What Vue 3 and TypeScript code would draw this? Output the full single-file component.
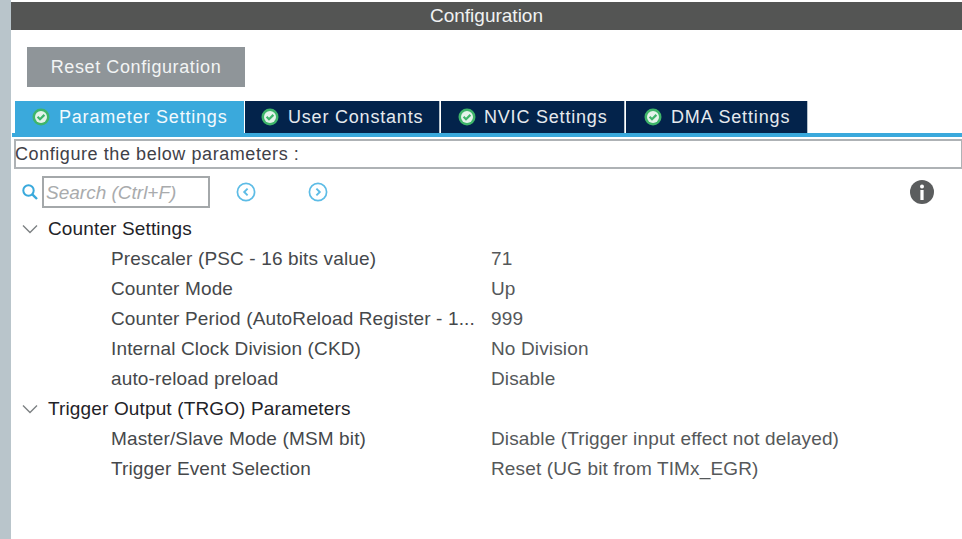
<script setup lang="ts">
interface Row { label: string; value: string }
interface Group { title: string; rows: Row[] }

const tabs = ['Parameter Settings', 'User Constants', 'NVIC Settings', 'DMA Settings']
const groups: Group[] = [
  {
    title: 'Counter Settings',
    rows: [
      { label: 'Prescaler (PSC - 16 bits value)', value: '71' },
      { label: 'Counter Mode', value: 'Up' },
      { label: 'Counter Period (AutoReload Register - 1...', value: '999' },
      { label: 'Internal Clock Division (CKD)', value: 'No Division' },
      { label: 'auto-reload preload', value: 'Disable' },
    ],
  },
  {
    title: 'Trigger Output (TRGO) Parameters',
    rows: [
      { label: 'Master/Slave Mode (MSM bit)', value: 'Disable (Trigger input effect not delayed)' },
      { label: 'Trigger Event Selection', value: 'Reset (UG bit from TIMx_EGR)' },
    ],
  },
]
</script>

<template>
  <div class="page">
    <div class="strip"></div>
    <main class="panel">
      <header class="title">Configuration</header>
      <button class="reset">Reset Configuration</button>
      <nav class="tabs">
        <div v-for="(t, i) in tabs" :key="t" class="tab" :class="['tab' + i, { active: i === 0 }]">
          <svg class="check" width="18" height="18" viewBox="0 0 18 18">
            <circle cx="9" cy="9" r="8.5" fill="#3fb56a" />
            <circle cx="9" cy="9" r="6" fill="#e4f3ea" />
            <path d="M5.6 8.8 8 11.2 12.4 6.9" fill="none" stroke="#3fb56a" stroke-width="2.2" />
          </svg>
          <span>{{ t }}</span>
        </div>
      </nav>
      <div class="configure">Configure the below parameters :</div>
      <div class="tools">
        <svg class="search" width="18" height="18" viewBox="0 0 18 18">
          <circle cx="7.5" cy="7.5" r="5.2" fill="none" stroke="#39a9dc" stroke-width="2" />
          <path d="M11.3 11.3 16 16" stroke="#39a9dc" stroke-width="2.4" />
        </svg>
        <div class="input">Search (Ctrl+F)</div>
        <svg class="nav prev" width="20" height="20" viewBox="0 0 20 20">
          <circle cx="10" cy="10" r="8.6" fill="none" stroke="#5dbce6" stroke-width="1.7" />
          <path d="M11.6 6.6 8.2 10l3.4 3.4" fill="none" stroke="#5dbce6" stroke-width="1.9" />
        </svg>
        <svg class="nav next" width="20" height="20" viewBox="0 0 20 20">
          <circle cx="10" cy="10" r="8.6" fill="none" stroke="#5dbce6" stroke-width="1.7" />
          <path d="M8.4 6.6 11.8 10l-3.4 3.4" fill="none" stroke="#5dbce6" stroke-width="1.9" />
        </svg>
        <svg class="info" width="24" height="24" viewBox="0 0 24 24">
          <circle cx="12" cy="12" r="12" fill="#5b5d5e" />
          <circle cx="12" cy="6.5" r="2" fill="#fff" />
          <rect x="10.4" y="10" width="3.2" height="10" fill="#fff" />
        </svg>
      </div>
      <section v-for="g in groups" :key="g.title">
        <div class="row head">
          <svg class="chev" width="16" height="10" viewBox="0 0 16 10">
            <path d="M1 1.5 8 8.5l7-7" fill="none" stroke="#7d8183" stroke-width="1.4" />
          </svg>
          <span>{{ g.title }}</span>
        </div>
        <div v-for="r in g.rows" :key="r.label" class="row item">
          <span class="label">{{ r.label }}</span>
          <span class="value">{{ r.value }}</span>
        </div>
      </section>
    </main>
  </div>
</template>

<style>
html, body { margin: 0; background: #fff; overflow: hidden; }
</style>

<style scoped>
.page { display: flex; width: 962px; height: 539px; overflow: hidden; font-family: "Liberation Sans", Arial, sans-serif; background: #fff; }
.strip { width: 11px; flex: none; background: #b9c5cb; }
.panel { flex: 1; min-width: 0; }
.title { margin-top: 2px; height: 28px; line-height: 28px; background: #545554; color: #f0f2f2; text-align: center; font-size: 19px; }
.reset { display: block; margin: 17px 0 0 16px; width: 218px; height: 40px; border: 0; background: #8f9599; color: #f2f4f4; font: 18px "Liberation Sans", Arial, sans-serif; letter-spacing: 0.6px; padding: 0; }
.tabs { display: flex; margin: 14px 0 0 1px; padding-left: 3px; height: 32px; border-bottom: 4px solid #3aa9dc; gap: 1px; }
.tab { display: flex; align-items: center; height: 32px; background: #03234b; color: #e6eaee; font-size: 18px; letter-spacing: 0.8px; box-sizing: border-box; padding-left: 16px; gap: 9px; border-right: 1px solid #b7c3cc; }
.tab0 { width: 229px; padding-left: 17px; }
.tab1 { width: 195px; }
.tab2 { width: 184px; padding-left: 17px; gap: 8px; }
.tab3 { width: 182px; padding-left: 18px; letter-spacing: 0.85px; }
.active { background: #3aa9dc; color: #f2f9fd; border-right: 0; }
.check { flex: none; }
.configure { margin: 2px 0 0 3px; height: 30px; box-sizing: border-box; border: 2px solid #aeb2b5; border-right-width: 1px; line-height: 26px; font-size: 18px; color: #3f4148; letter-spacing: 0.57px; text-indent: -1px; white-space: nowrap; }
.tools { position: relative; display: flex; align-items: center; height: 32px; margin-top: 7px; padding-left: 10px; }
.search { flex: none; }
.input { box-sizing: border-box; width: 168px; height: 32px; margin-left: 3px; border: 2px solid #a4a8aa; font-style: italic; font-size: 19px; line-height: 30px; color: #a9abad; padding-left: 2px; white-space: nowrap; }
.nav { flex: none; }
.prev { margin-left: 26px; }
.next { margin-left: 52px; }
.info { margin-left: auto; margin-right: 28px; }
.row { display: flex; align-items: center; height: 30px; font-size: 19px; letter-spacing: 0.14px; white-space: nowrap; }
.head { color: #1f2328; padding-left: 11px; }
.head span { margin-left: 10px; }
.chev { flex: none; }
section:first-of-type .head { margin-top: 6px; }
.item { color: #45484b; padding-left: 100px; }
.label { width: 380px; flex: none; }
.value { color: #55585a; }
</style>
